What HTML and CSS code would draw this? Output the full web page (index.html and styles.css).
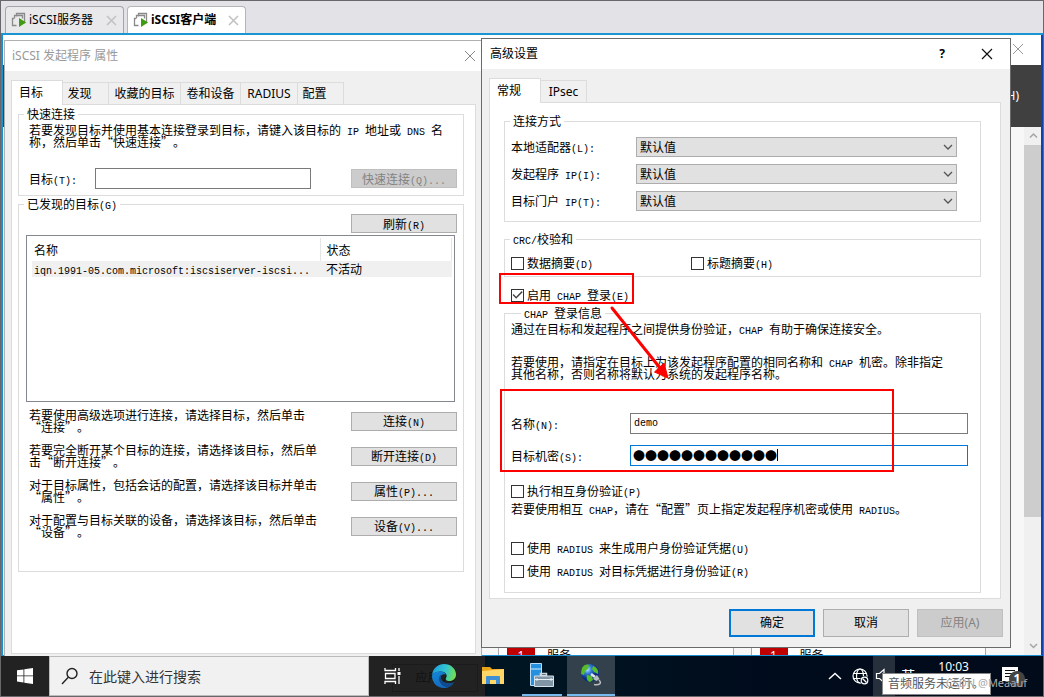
FILE: index.html
```html
<!DOCTYPE html>
<html lang="zh-CN">
<head>
<meta charset="utf-8">
<title>iSCSI客户端</title>
<link rel="stylesheet" href="styles.css">
</head>
<body>
<div class="console">
  <nav class="vm-tabs">
    <button class="vm-tab">
      <svg class="vm-icon" width="16" height="16" viewBox="0 0 16 16"><path d="M5.500 4.500v-3h8v9h-3M3.500 6.500v-3h8v3M3 6.500H1.500v7h4" fill="none" stroke="#8a8a8a" stroke-width="1.300"/><path d="M8 6l7 4.500-7 4.500z" fill="#3f9c12"/></svg>
      <span class="vm-name">iSCSI服务器</span>
      <svg width="11" height="11" viewBox="0 0 11 11"><path d="M1 1l9 9M10 1l-9 9" stroke="#c2c2c4" stroke-width="1.600"/></svg>
    </button>
    <button class="vm-tab vm-tab-active">
      <svg class="vm-icon" width="16" height="16" viewBox="0 0 16 16"><path d="M5.500 4.500v-3h8v9h-3M3.500 6.500v-3h8v3M3 6.500H1.500v7h4" fill="none" stroke="#8a8a8a" stroke-width="1.300"/><path d="M8 6l7 4.500-7 4.500z" fill="#3f9c12"/></svg>
      <span class="vm-name">iSCSI客户端</span>
      <svg width="11" height="11" viewBox="0 0 11 11"><path d="M1 1l9 9M10 1l-9 9" stroke="#c2c2c4" stroke-width="1.600"/></svg>
    </button>
  </nav>

  <main class="desktop">
    <section class="manager">
      <header class="manager-title">
        <svg width="12" height="12" viewBox="0 0 12 12"><path d="M1 1l10 10M11 1L1 11" stroke="#999"/></svg>
      </header>
      <div class="manager-menu">帮助(H)</div>
      <div class="manager-body">
        <div class="manager-cards">
          <div class="card"><span class="card-flag">1</span><span>服务</span></div>
          <div class="card"><span class="card-flag">1</span><span>服务</span></div>
        </div>
        <div class="scrollbar">
          <svg width="18" height="18" viewBox="0 0 18 18"><path d="M6 10.500l3.500-3.500 3.500 3.500" fill="none" stroke="#a5a5a5" stroke-width="1.500"/></svg>
          <div class="scroll-thumb"></div>
          <svg width="18" height="18" viewBox="0 0 18 18"><path d="M6 7l3.500 3.500 3.500-3.500" fill="none" stroke="#a5a5a5" stroke-width="1.500"/></svg>
        </div>
      </div>
    </section>

    <section class="window props">
      <header class="titlebar titlebar-idle">
        <span>iSCSI 发起程序 属性</span>
        <button class="close" aria-label="关闭"><svg width="12" height="12" viewBox="0 0 12 12"><path d="M1 1l10 10M11 1L1 11" stroke="#888"/></svg></button>
      </header>
      <div class="props-body">
        <div class="tabs">
          <button class="tab tab-on">目标</button>
          <button class="tab tab-46">发现</button>
          <button class="tab tab-72">收藏的目标</button>
          <button class="tab tab-60">卷和设备</button>
          <button class="tab tab-57">RADIUS</button>
          <button class="tab tab-46">配置</button>
        </div>
        <div class="panel props-panel">
          <fieldset class="quick">
            <legend>快速连接</legend>
            <p>若要发现目标并使用基本连接登录到目标，请键入该目标的<i> IP </i>地址或<i> DNS </i>名称，然后单击“快速连接”。</p>
            <div class="quick-row">
              <label for="target">目标<i>(T):</i></label>
              <input id="target" class="field" type="text">
              <button class="btn" disabled>快速连接<i>(Q)...</i></button>
            </div>
          </fieldset>
          <fieldset class="found">
            <legend>已发现的目标<i>(G)</i></legend>
            <button class="btn refresh">刷新<i>(R)</i></button>
            <div class="list">
              <table>
                <thead><tr><th>名称</th><th>状态</th></tr></thead>
                <tbody><tr><td><i>iqn.1991-05.com.microsoft:iscsiserver-iscsi...</i></td><td>不活动</td></tr></tbody>
              </table>
            </div>
            <div class="actions">
              <p>若要使用高级选项进行连接，请选择目标，然后单击<br>“连接”。</p>
              <button class="btn">连接<i>(N)</i></button>
              <p>若要完全断开某个目标的连接，请选择该目标，然后单<br>击“断开连接”。</p>
              <button class="btn">断开连接<i>(D)</i></button>
              <p>对于目标属性，包括会话的配置，请选择该目标并单击<br>“属性”。</p>
              <button class="btn">属性<i>(P)...</i></button>
              <p>对于配置与目标关联的设备，请选择该目标，然后单击<br>“设备”。</p>
              <button class="btn">设备<i>(V)...</i></button>
            </div>
          </fieldset>
        </div>
      </div>
    </section>

    <section class="window dialog">
      <header class="titlebar">
        <span>高级设置</span>
        <button class="help">?</button>
        <button class="close" aria-label="关闭"><svg width="12" height="12" viewBox="0 0 12 12"><path d="M1 1l10 10M11 1L1 11" stroke="#111" stroke-width="1.200"/></svg></button>
      </header>
      <div class="dialog-body">
        <div class="tabs">
          <button class="tab tab-on">常规</button>
          <button class="tab tab-46">IPsec</button>
        </div>
        <div class="panel dialog-panel">
          <fieldset class="connect">
            <legend>连接方式</legend>
            <div class="select-row">
              <label for="adapter">本地适配器<i>(L):</i></label>
              <div class="combo"><select id="adapter"><option>默认值</option></select><svg width="10" height="6" viewBox="0 0 10 6"><path d="M1 1l4 4 4-4" fill="none" stroke="#555" stroke-width="1.300"/></svg></div>
            </div>
            <div class="select-row">
              <label for="initiator">发起程序<i> IP(I):</i></label>
              <div class="combo"><select id="initiator"><option>默认值</option></select><svg width="10" height="6" viewBox="0 0 10 6"><path d="M1 1l4 4 4-4" fill="none" stroke="#555" stroke-width="1.300"/></svg></div>
            </div>
            <div class="select-row">
              <label for="portal">目标门户<i> IP(T):</i></label>
              <div class="combo"><select id="portal"><option>默认值</option></select><svg width="10" height="6" viewBox="0 0 10 6"><path d="M1 1l4 4 4-4" fill="none" stroke="#555" stroke-width="1.300"/></svg></div>
            </div>
          </fieldset>
          <fieldset class="crc">
            <legend><i>CRC/</i>校验和</legend>
            <label class="check"><input type="checkbox"><span>数据摘要<i>(D)</i></span></label>
            <label class="check"><input type="checkbox"><span>标题摘要<i>(H)</i></span></label>
          </fieldset>
          <label class="check enable"><input type="checkbox" checked><span>启用<i> CHAP </i>登录<i>(E)</i></span></label>
          <fieldset class="chap">
            <legend><i>CHAP </i>登录信息</legend>
            <p>通过在目标和发起程序之间提供身份验证，<i>CHAP </i>有助于确保连接安全。</p>
            <p class="chap-use">若要使用，请指定在目标上为该发起程序配置的相同名称和<i> CHAP </i>机密。除非指定<br>其他名称，否则名称将默认为系统的发起程序名称。</p>
            <div class="field-row">
              <label for="name">名称<i>(N):</i></label>
              <input id="name" class="field" type="text" value="demo">
            </div>
            <div class="field-row">
              <label for="secret">目标机密<i>(S):</i></label>
              <div class="secret"><input id="secret" class="field" type="text" value="●●●●●●●●●●●●"><span class="caret"></span></div>
            </div>
            <label class="check mutual"><input type="checkbox"><span>执行相互身份验证<i>(P)</i></span></label>
            <p class="mutual-note">若要使用相互<i> CHAP</i>，请在“配置”页上指定发起程序机密或使用<i> RADIUS</i>。</p>
            <label class="check"><input type="checkbox"><span>使用<i> RADIUS </i>来生成用户身份验证凭据<i>(U)</i></span></label>
            <label class="check"><input type="checkbox"><span>使用<i> RADIUS </i>对目标凭据进行身份验证<i>(R)</i></span></label>
          </fieldset>
        </div>
        <footer class="dialog-foot">
          <button class="big-btn big-default">确定</button>
          <button class="big-btn">取消</button>
          <button class="big-btn" disabled>应用(A)</button>
        </footer>
      </div>
      <svg class="marks" width="528" height="608" viewBox="482 39 528 608">
        <g fill="none" stroke="#f00" stroke-width="2"><rect x="500" y="274" width="133" height="29"/><rect x="501" y="390" width="392" height="81"/></g>
        <path d="M612 308l48 60" stroke="#f00" stroke-width="3" stroke-linecap="round"/>
        <path d="M668 378l-13.500-6 9.500-9z" fill="#f00" stroke="#f00"/>
      </svg>
    </section>

    <footer class="taskbar">
      <button class="start" aria-label="开始"><svg width="16" height="16" viewBox="0 0 16 16"><path d="M0 2.300l6.500-.9v6.100H0zM7.300 1.300L16 0v7.500H7.300zM0 8.300h6.500v6.200L0 13.600zM7.300 8.300H16V16l-8.700-1.300z" fill="#fff"/></svg></button>
      <label class="search">
        <svg width="18" height="18" viewBox="0 0 18 18"><circle cx="11" cy="6.500" r="5" fill="none" stroke="#222" stroke-width="1.400"/><path d="M7.300 10.300L1 17" stroke="#222" stroke-width="1.400"/></svg>
        <input type="text" placeholder="在此键入进行搜索" aria-label="在此键入进行搜索">
      </label>
      <div class="shade">
        <button class="task task-view" aria-label="任务视图"><svg width="18" height="16" viewBox="0 0 18 16"><path d="M1 0v2.500h10.500V0M1 16v-2.500h10.500V16M1.500 5.500h9.500v5H1.500zM15 0v3M15 8v8" fill="none" stroke="#fff" stroke-width="1.300"/><path d="M13.500 4h3v3h-3z" fill="#fff"/></svg></button>
        <span class="ghost">应用(A)</span>
        <button class="task task-edge" aria-label="Edge"><svg width="24" height="24" viewBox="0 0 24 24"><defs><linearGradient id="eg" x1="0" x2="1" y1=".3" y2=".5"><stop offset="0" stop-color="#1b9de0"/><stop offset=".55" stop-color="#32c5d0"/><stop offset="1" stop-color="#74dc50"/></linearGradient><linearGradient id="eb" x1="0" x2=".7" y1="0" y2="1"><stop offset="0" stop-color="#1788d8"/><stop offset="1" stop-color="#1165b8"/></linearGradient></defs><path d="M0 11C1 4 6 0 12 0c7 0 12 5 12 10.500 0 4-3 6.500-6.500 6.500-3 0-4.500-1.500-3.500-3 2-3-.5-6.500-5-6.500C5 7.500 1.500 9 0 11z" fill="url(#eg)"/><path d="M0 12c.5-3 4-4.800 8.500-4.500 3 .2 5 1.500 5.500 3C10 9.500 8 12 9 15c1.500 4.500 8 5.500 13 3.200C20 22 16 24 12 24 5 24 0 18.500 0 12z" fill="url(#eb)"/><path d="M9 10.500C5 14 7.500 21.500 15 23.600c3-.8 5.500-2.500 7-5.400-5 2.300-11 1.500-13-3-.6-1.500-.5-3.200 0-4.700z" fill="#104a8c"/></svg></button>
      </div>
      <button class="task task-files" aria-label="文件资源管理器"><svg width="22" height="20" viewBox="0 0 22 20"><path d="M0 1h8l2 2h12v15H0z" fill="#e8a317"/><path d="M0 5l22-2v15H0z" fill="#ffd768"/><path d="M4 18v-7q0-1 1-1h12q1 0 1 1v7h-4v-4H8v4z" fill="#3f8fd4"/></svg></button>
      <button class="task task-open" aria-label="服务器管理器"><svg width="24" height="24" viewBox="0 0 24 24"><path d="M.5.500h11v22H.5z" fill="#2590dd" stroke="#b9ddf5"/><path d="M1 6h10" stroke="#d5efff"/><path d="M10.500 12.500h6v-2h-6z" fill="none" stroke="#cbd8e0" stroke-width="1.500"/><path d="M4.500 13h19v10.500h-19z" fill="#8096a6" stroke="#d5e2ea"/><path d="M5 16.500h18M7 15v3M21 15v3" stroke="#e7f0f5"/></svg></button>
      <button class="task task-open task-current" aria-label="iSCSI 发起程序"><svg width="24" height="24" viewBox="0 0 24 24"><defs><radialGradient id="gl" cx=".35" cy=".3"><stop offset="0" stop-color="#bce8ff"/><stop offset=".45" stop-color="#3681dc"/><stop offset="1" stop-color="#0b2c88"/></radialGradient></defs><circle cx="11" cy="10" r="9" fill="url(#gl)"/><path d="M3 5c2-4 6-4 7-3l-1 4-3 2-1 4-3-1zM14 3c4 1 6 5 5 8l-4-2-2-3zM8 12l5 1 1 4-3 2c-3-1-4-4-3-7z" fill="#54bd27"/><path d="M12 11l4 3" stroke="#e4e6e8" stroke-width="2.500"/><path d="M14 16l4-4 2.500 4-3 2z" fill="#b9bdc0"/><path d="M20 17c3.500 3.500 0 5.500-5 4.500" fill="none" stroke="#b9bdc0" stroke-width="1.500"/></svg></button>
      <div class="tray">
        <svg class="tray-up" width="14" height="8" viewBox="0 0 14 8"><path d="M1 7l6-5.500L13 7" fill="none" stroke="#fff" stroke-width="1.500"/></svg>
        <svg width="17" height="17" viewBox="0 0 17 17"><g fill="none" stroke="#fff" stroke-width="1.200"><circle cx="8" cy="8" r="7"/><ellipse cx="8" cy="8" rx="3.500" ry="7"/><path d="M1 5.500h14M1 10.500h14"/></g><circle cx="12.500" cy="12.500" r="4.500" fill="#020b1a"/><g fill="none" stroke="#fff" stroke-width="1.200"><circle cx="12.500" cy="12.500" r="3.300"/><path d="M10.500 10.500l4 4"/></g></svg>
        <span class="speaker"><svg width="16" height="16" viewBox="0 0 16 16"><path d="M1.500 5.500h3L9 1.500v13l-4.500-4h-3z" fill="none" stroke="#fff" stroke-width="1.200"/></svg></span>
        <span class="ime">英</span>
        <span class="clock">10:03</span>
        <span class="notice"><svg width="16" height="18" viewBox="0 0 16 18"><path d="M0 0h16v14h-5l-3 3.500V14H0z" fill="#fff"/><path d="M3 3.500h10M3 6.500h10M3 9.500h7" stroke="#111"/></svg><b>1</b></span>
      </div>
      <span class="tooltip">音频服务未运行。</span>
      <span class="watermark">CSDN @Meaauf</span>
    </footer>
  </main>
</div>
</body>
</html>
```
FILE: styles.css
```css
* { box-sizing: border-box; }
body {
  margin: 0;
  font: 12px/14px "Noto Sans", "Noto Sans CJK SC", sans-serif;
  text-spacing-trim: space-all;
  color: #000;
}
button, input, select { font: inherit; color: inherit; margin: 0; padding: 0; border: 0; background: none; border-radius: 0; }
svg { display: block; flex: none; }
p { margin: 0; }
i { font: 10px/1 "Liberation Mono", monospace; line-height: 0; white-space: pre; }

.console { height: 100vh; display: flex; flex-direction: column; border: 1px solid #68686b; overflow: hidden; }

.vm-tabs { flex: none; height: 32px; display: flex; gap: 3px; padding: 5px 4px 0; background: #e3e3e7; }
.vm-tab { width: 119px; height: 27px; display: flex; align-items: center; padding: 0 6px 0 5px; background: #e9e9ec; border: 1px solid #a5a5a9; border-bottom: 0; border-radius: 4px 4px 0 0; }
.vm-tab-active { background: #fff; border-color: #b5b5b8; font-weight: 700; }
.vm-icon { margin-right: 2px; }
.vm-name { flex: 1; text-align: left; white-space: nowrap; }

.desktop { flex: 1; min-height: 0; position: relative; background: #fff; border-top: 2px solid #1b94d2; }

.manager { position: absolute; inset: 0 0 40px; display: flex; flex-direction: column; border: solid #1b8fd0; border-width: 0 2px 1px; border-right-color: #0a45b5; background: #fff; }
.manager-title { flex: none; height: 30px; display: flex; justify-content: flex-end; padding: 8px 17px; }
.manager-menu { flex: none; height: 62px; line-height: 62px; text-align: right; padding-right: 22px; color: #fff; background: #404040; }
.manager-body { flex: 1; min-height: 0; display: flex; background: #f7f7f7; }
.manager-cards { flex: 1; display: flex; align-items: flex-end; gap: 17px; padding-left: 495px; padding-right: 38px; }
.card { flex: 1; height: 9px; overflow: hidden; display: flex; gap: 12px; padding-left: 8px; background: #fff; border: solid #aaa; border-width: 0 1px; line-height: 20px; }
.card-flag { width: 28px; height: 9px; background: #c00000; color: #fff; text-align: center; }
.scrollbar { width: 17px; display: flex; flex-direction: column; background: #f0f0f0; }
.scroll-thumb { flex: 0 1 372px; margin-bottom: auto; background: #cdcdcd; }

.window { position: absolute; display: flex; flex-direction: column; background: #f0f0f0; border: 1px solid #6a6a6a; }
.props { left: 3px; top: 5px; bottom: 40px; width: 478px; border-color: #b0b0b0; border-bottom: 0; }
.dialog { left: 480px; top: 3px; width: 530px; }
.titlebar { flex: none; height: 30px; display: flex; align-items: center; padding: 0 17px 0 8px; background: #fff; }
.titlebar span { flex: 1; }
.titlebar-idle { color: #999; padding: 0 5px 0 7px; }
.help { width: 20px; margin-right: 29px; font-weight: 700; }

.tabs { display: flex; align-items: flex-end; height: 24px; flex: none; }
.tab { height: 22px; margin-left: -1px; border: 1px solid #dcdcdc; border-bottom: 0; background: #f0f0f0; white-space: nowrap; }
.tab-on { width: 52px; height: 25px; margin: 0 0 -1px; padding-right: 12px; background: #fff; z-index: 1; }
.tab-46 { width: 47px; }
.tab-57 { width: 58px; }
.tab-60 { width: 61px; }
.tab-72 { width: 73px; }
.props .tab-46 { padding-right: 12px; }
.panel { background: #fff; border: 1px solid #dcdcdc; font-family: "Noto Sans CJK SC", sans-serif; line-height: 12px; }

fieldset { margin: 0; min-width: 0; border: 1px solid #dcdcdc; }
legend { height: 14px; line-height: 14px; padding: 0 3px; }

.btn { width: 106px; height: 19px; line-height: 12px; background: #e1e1e1; border: 1px solid #adadad; }
.btn:disabled { background: #ccc; border-color: #bfbfbf; color: #838383; }
.field { height: 21px; min-width: 0; border: 1px solid #7a7a7a; background: #fff; padding: 0 3px; }

.props-body { flex: 1; min-height: 0; display: flex; flex-direction: column; padding: 9px 5px 2px 6px; }
.props-panel { flex: 1; padding: 2px 11px 0 6px; }
.quick { padding: 3px 6px 6px 10px; }
.quick p { margin-right: 8px; }
.quick legend, .found legend { margin-left: -5px; }
.quick-row { display: flex; align-items: center; margin-top: 20px; }
.quick-row label { width: 66px; }
.quick-row .field { width: 216px; margin-right: auto; }
.found { margin-top: 1px; padding: 3px 6px 33px 10px; }
.refresh { display: block; margin-left: auto; }
.list { height: 167px; margin: 2px 2px 7px -3px; border: 1px solid #828790; padding: 2px 2px 0 5px; }
table { width: 100%; border-collapse: collapse; table-layout: fixed; }
th { height: 23px; padding: 0 2px; font-weight: 400; text-align: left; border-right: 1px solid #e5e5e5; }
th:first-child { width: 288px; }
th + th, td + td { padding-left: 6px; }
td { height: 16px; padding: 0 2px; background: #f0f0f0; }
.actions { display: grid; grid-template-columns: 1fr 106px; row-gap: 11px; align-items: center; }

.dialog-body { padding: 9px 9px 10px 7px; }
.dialog-panel { padding: 11px 19px 5px 14px; }
.connect { display: grid; gap: 7px; padding: 9px 23px 10px 6px; }
.connect legend, .crc legend { margin-left: -1px; }
.select-row { display: flex; align-items: center; }
.select-row label { width: 125px; }
.combo { flex: 1; display: grid; align-items: center; }
.combo select { grid-area: 1 / 1; appearance: none; height: 20px; padding: 0 3px; background: #e1e1e1; border: 1px solid #adadad; }
.combo svg { grid-area: 1 / 1; justify-self: end; margin-right: 4px; pointer-events: none; }
.crc { display: grid; grid-template-columns: 180px 1fr; margin-top: 10px; padding: 10px 6px 6px; }
.check { display: flex; align-items: center; gap: 3px; height: 14px; }
.check input { appearance: none; flex: none; width: 13px; height: 13px; border: 1px solid #333; background: #fff; }
.check input:checked::before { content: ""; display: block; height: 11px; background: #444; clip-path: polygon(5% 50%, 14% 42%, 38% 66%, 88% 14%, 97% 24%, 38% 84%); }
.enable { margin: 11px 0 4px 7px; }
.chap { padding: 3px 12px 14px 6px; }
.chap legend { margin-left: 10px; }
.chap-use { margin: 21px 0 33px; }
.field-row { display: flex; align-items: center; margin-bottom: 11px; }
.field-row label { width: 119px; }
.field-row > .field, .secret { flex: 1; }
#name { font: 10px "Liberation Mono", monospace; }
.secret { position: relative; display: flex; }
.secret .field { flex: 1; border-color: #0078d7; padding: 0 2px; }
.caret { position: absolute; left: 147px; top: 4px; width: 1px; height: 12px; background: #000; }
.mutual { margin-top: 18px; }
.mutual-note { margin: 5px 0 26px; }
.check + .check { margin-top: 9px; }
.crc .check + .check { margin-top: 0; }
.dialog-foot { display: flex; justify-content: flex-end; gap: 8px; margin: 10px -2px 0 0; }
.big-btn { width: 86px; height: 28px; background: #e1e1e1; border: 1px solid #adadad; }
.big-default { border: 2px solid #0078d7; }
.big-btn:disabled { color: #838383; background: #ccc; border-color: #bfbfbf; }
.marks { position: absolute; left: 0; top: 0; pointer-events: none; }

.taskbar { position: absolute; inset: auto 0 0; height: 40px; display: flex; background: linear-gradient(90deg, #001522 50%, #000b1c 75%, #020b1a); color: #fff; }
.start { width: 48px; display: flex; align-items: center; justify-content: center; background: #222; }
.search { width: 320px; display: flex; align-items: center; gap: 10px; padding-left: 11px; background: #f1f1f1; border: 1px solid #bbb; font-size: 14px; }
.search input { flex: 1; min-width: 0; }
.search input::placeholder { color: #333; opacity: 1; }
.shade { width: 116px; display: flex; background: #222; position: relative; }
.task { display: flex; align-items: center; justify-content: center; width: 48px; }
.task-view, .task-edge, .task-files { z-index: 1; }
.task-edge { margin-left: auto; margin-right: 17px; }
.ghost { position: absolute; left: 23px; top: 8px; width: 86px; height: 28px; line-height: 26px; text-align: center; color: #111; border: 1px solid #1b1b1b; }
.task-files { width: 16px; }
.task-open { width: 40px; margin: 0 5px 0 21px; border-bottom: 2px solid #76b9ed; }
.task-current { width: 48px; margin: 0; background: #33414d; }
.tray { margin-left: auto; display: flex; align-items: center; padding-right: 25px; }
.tray-up { margin-right: 10px; }
.speaker { align-self: stretch; width: 22px; margin-left: 4px; display: flex; align-items: center; padding-left: 2px; background: #26303c; overflow: hidden; }
.ime { width: 26px; text-align: center; font-size: 14px; }
.clock { align-self: flex-start; margin: 4px 33px 0 17px; }
.notice { position: relative; }
.notice b { position: absolute; left: 7px; top: 4px; width: 16px; height: 16px; border-radius: 8px; background: #444; line-height: 15px; text-align: center; }
.tooltip { position: absolute; right: 52px; bottom: 1px; width: 109px; height: 22px; line-height: 19px; padding-left: 5px; white-space: nowrap; color: #555; background: #fff; border: 1px solid #888; }
.watermark { position: absolute; right: 16px; bottom: 6px; font-size: 11px; color: #aaa; }
```
